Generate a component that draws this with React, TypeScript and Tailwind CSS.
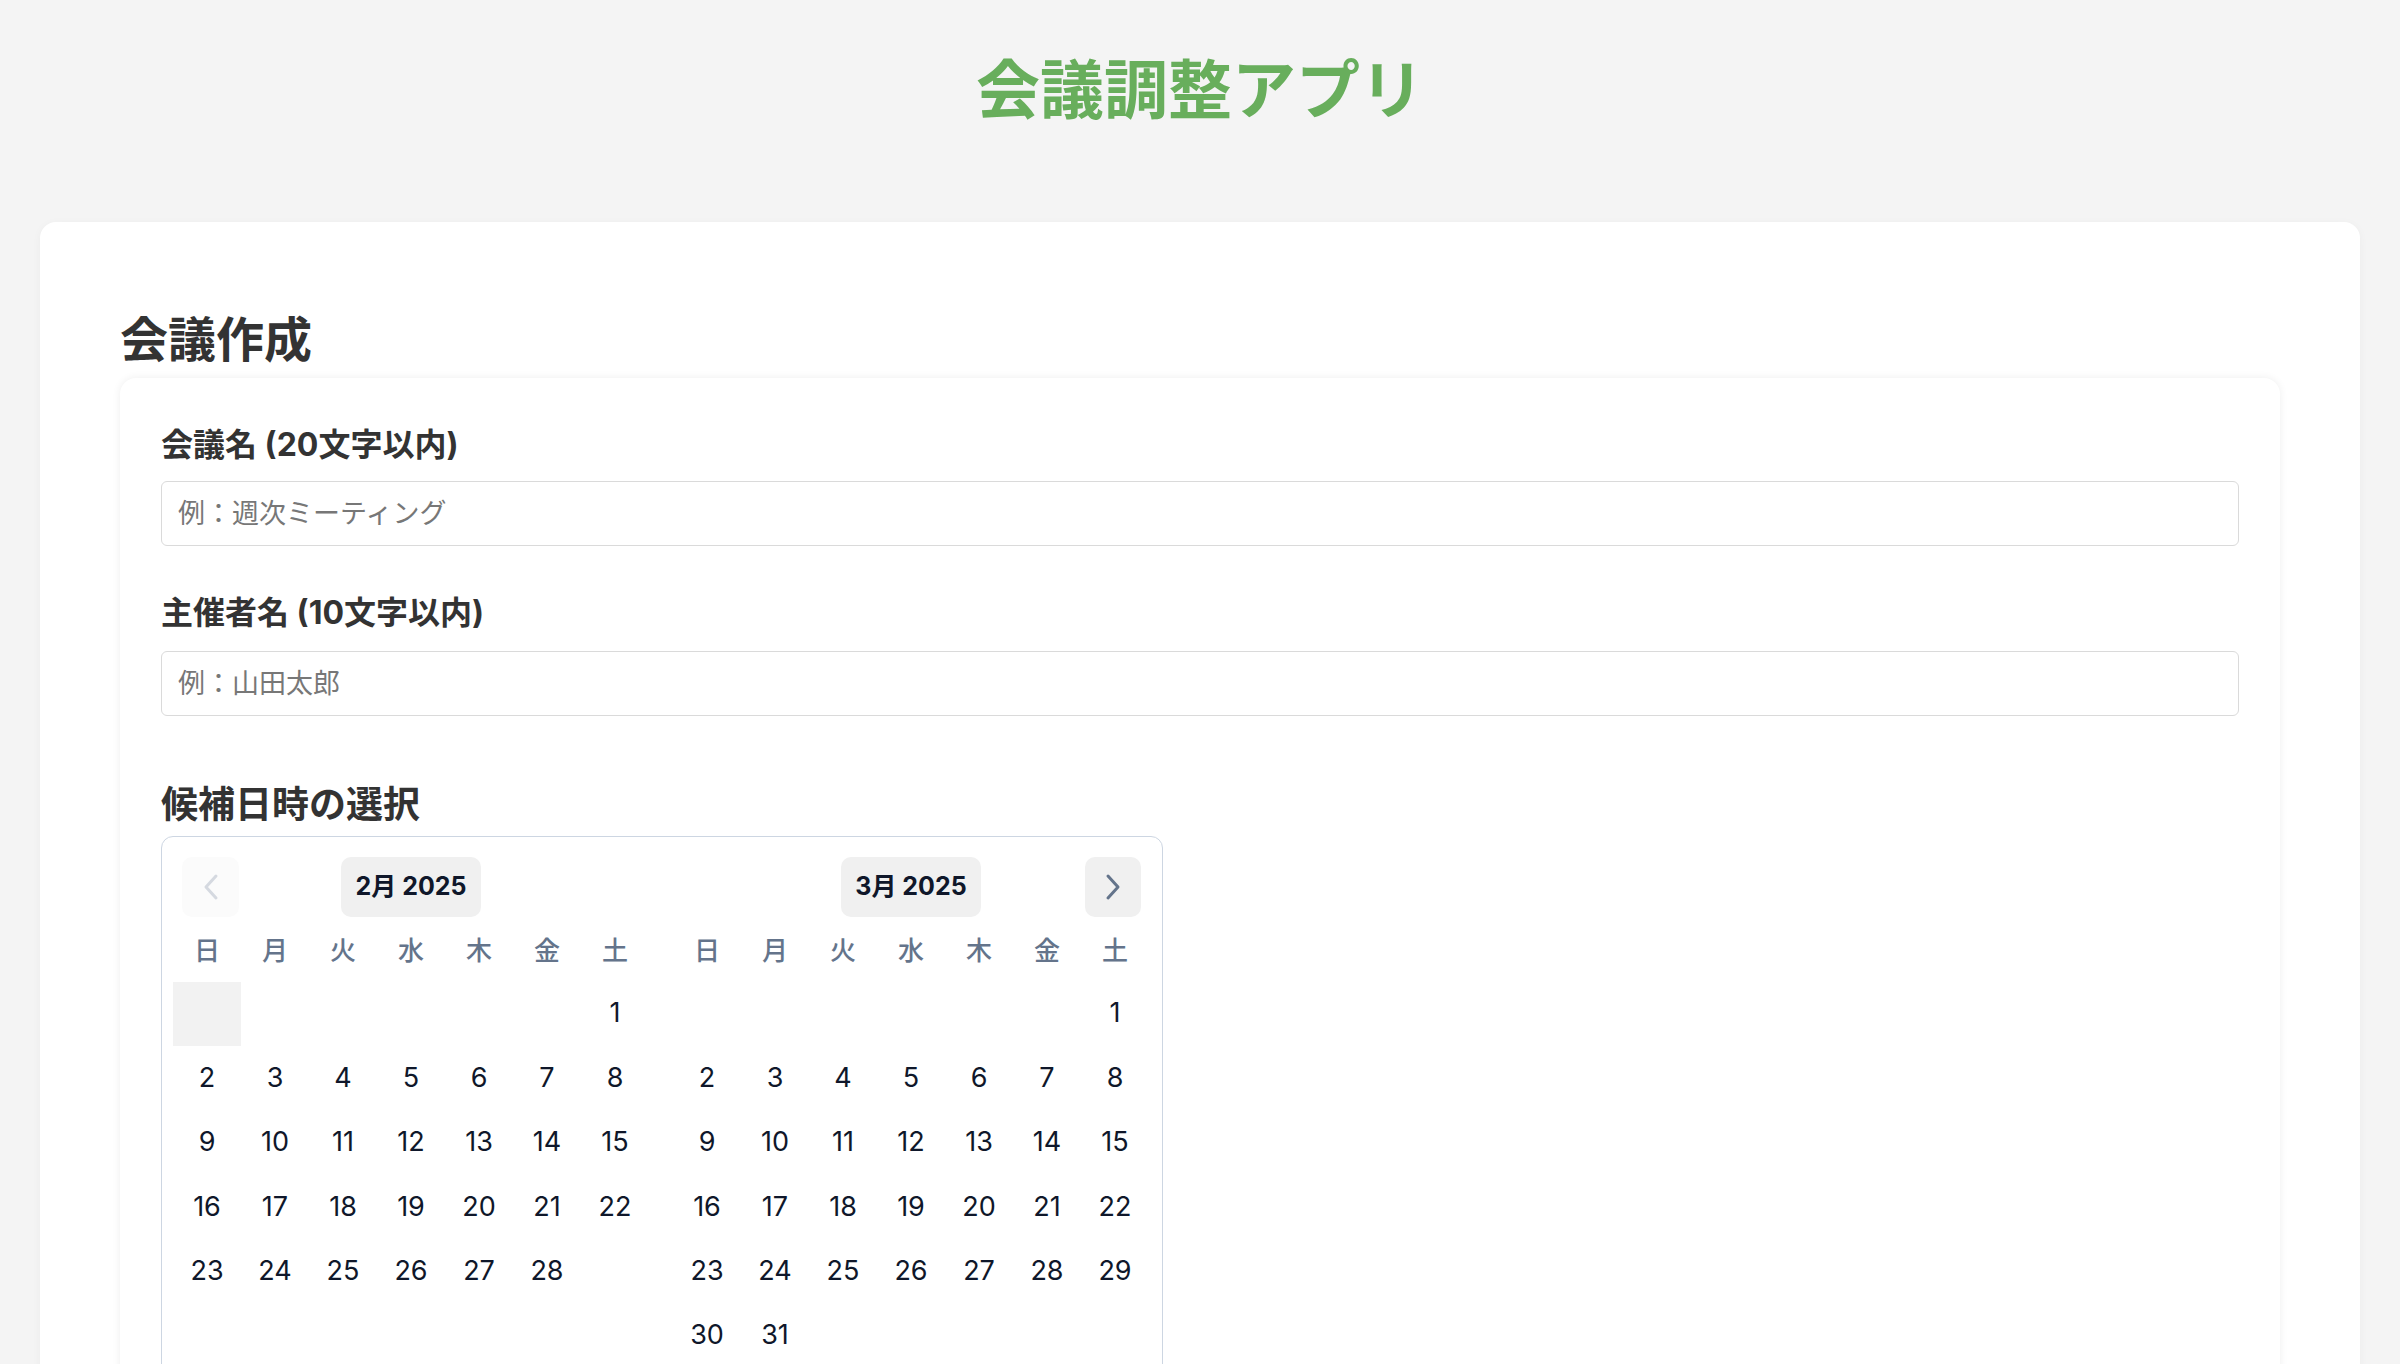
import React from 'react';

const weekdays = ['日', '月', '火', '水', '木', '金', '土'];

// leading blanks + number of days
const months = [
  { label: '2月 2025', offset: 6, days: 28 },
  { label: '3月 2025', offset: 6, days: 31 },
];

function Chevron({ dir, color }: { dir: 'left' | 'right'; color: string }) {
  return (
    <svg width="16" height="28" viewBox="0 0 16 28" fill="none">
      <polyline
        points={dir === 'left' ? '13,3 3,14 13,25' : '3,3 13,14 3,25'}
        stroke={color}
        strokeWidth="3"
        strokeLinecap="round"
        strokeLinejoin="round"
      />
    </svg>
  );
}

function Month({ index }: { index: number }) {
  const m = months[index];
  const cells: (number | null)[] = [];
  for (let i = 0; i < m.offset; i++) cells.push(null);
  for (let d = 1; d <= m.days; d++) cells.push(d);

  return (
    <div className="w-[476px]">
      <div className="grid h-[60px] grid-cols-[1fr_auto_1fr] items-center">
        <div className="flex">
          {index === 0 && (
            <button className="ml-[9px] flex h-[60px] w-[57px] items-center justify-center rounded-[10px] bg-[#fbfbfb]">
              <Chevron dir="left" color="#d5d9e0" />
            </button>
          )}
        </div>
        <div className="flex h-[60px] w-[140px] items-center justify-center rounded-[10px] bg-[#f0f0f0] text-[25px] font-bold text-[#0f172a]">
          {m.label}
        </div>
        <div className="flex justify-end">
          {index === 1 && (
            <button className="mr-[8px] flex h-[60px] w-[56px] items-center justify-center rounded-[10px] bg-[#f0f0f0]">
              <Chevron dir="right" color="#64748b" />
            </button>
          )}
        </div>
      </div>

      <div className="mt-[14px] mb-[11px] grid h-[40px] grid-cols-7 items-center text-center text-[26px] font-medium text-[#64748b]">
        {weekdays.map((w) => (
          <span key={w}>{w}</span>
        ))}
      </div>

      <div className="grid grid-cols-7 auto-rows-[64.4px] text-[27px] text-[#0f172a]">
        {cells.map((d, i) => (
          <div
            key={i}
            className={
              'flex items-center justify-center ' +
              (index === 0 && i === 0 ? 'bg-[#f2f2f2]' : '')
            }
          >
            {d}
          </div>
        ))}
      </div>
    </div>
  );
}

export default function App() {
  return (
    <div className="min-h-screen bg-[#f4f4f4] px-[40px] pb-[40px] font-[Inter,'Noto_Sans_CJK_JP',sans-serif]">
      <h1 className="pt-[58px] text-center text-[64px] leading-[64px] font-bold text-[#68ae5c]">
        会議調整アプリ
      </h1>

      <div className="mt-[100px] rounded-[16px] bg-white px-[80px] pt-[94px] pb-[80px] shadow-[0_2px_10px_rgba(0,0,0,0.04)]">
        <h2 className="text-[48px] leading-[48px] font-bold text-[#333333]">会議作成</h2>

        <div className="mt-[14px] rounded-[16px] bg-white px-[41px] pt-[47px] pb-[48px] shadow-[0_0_8px_rgba(0,0,0,0.07)]">
          <label className="mb-[16px] block text-[32px] leading-[40px] font-bold text-[#333333]">
            会議名 (20文字以内)
          </label>
          <input
            placeholder="例：週次ミーティング"
            className="block h-[65px] w-full rounded-[6px] border-[1.5px] border-[#dadada] px-[16px] text-[27px] text-[#333333] outline-none placeholder:text-[#777777]"
          />

          <label className="mt-[47px] mb-[18px] block text-[32px] leading-[40px] font-bold text-[#333333]">
            主催者名 (10文字以内)
          </label>
          <input
            placeholder="例：山田太郎"
            className="block h-[65px] w-full rounded-[6px] border-[1.5px] border-[#dadada] px-[16px] text-[27px] text-[#333333] outline-none placeholder:text-[#777777]"
          />

          <h3 className="mt-[69px] mb-[11px] text-[37px] leading-[40px] font-bold text-[#333333]">
            候補日時の選択
          </h3>
          <div className="w-[1002px] rounded-[12px] border-[1.5px] border-[#cdd6e2] px-[11px] pt-[19.5px] pb-[20px]">
            <div className="flex items-start gap-[24px]">
              <Month index={0} />
              <Month index={1} />
            </div>
          </div>
        </div>
      </div>
    </div>
  );
}
